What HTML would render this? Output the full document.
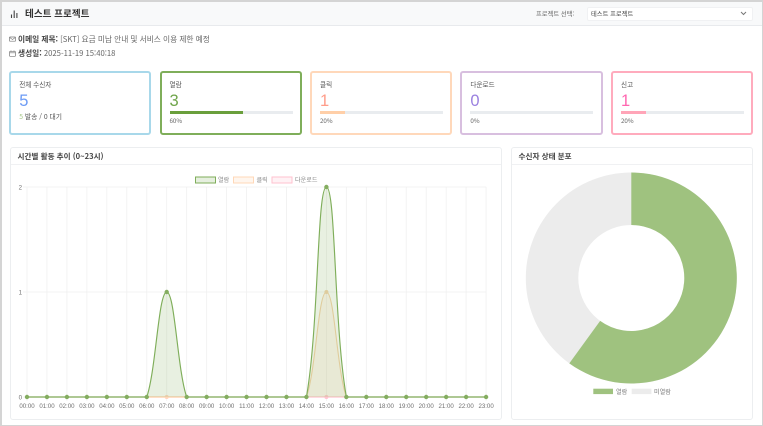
<!DOCTYPE html>
<html lang="ko"><head><meta charset="utf-8"><title>테스트 프로젝트</title>
<style>
html,body{margin:0;padding:0;width:763px;height:426px;overflow:hidden;background:#fff}
body{position:relative;font-family:"Noto Sans CJK KR","Liberation Sans",sans-serif;color:#333}
.a{position:absolute;white-space:nowrap;line-height:1}
.t{filter:blur(.3px)}
.card{position:absolute;top:70.5px;width:142.3px;height:64px;box-sizing:border-box;border:2px solid;border-radius:3px;background:#fff}
.box{position:absolute;box-sizing:border-box;background:#fff;border:1px solid #eceef0;border-radius:3px}
.bar{position:absolute;left:8px;top:38.5px;width:123px;height:3px;background:#e9ecef}
.bar i{display:block;height:3px}
.l{position:absolute;left:8px;top:7.5px;font-size:6.6px;line-height:8px;color:#555;white-space:nowrap}
.n{position:absolute;left:8px;top:19.5px;font-family:"Liberation Sans",sans-serif;font-size:16.5px;line-height:18px;white-space:nowrap}
.p{position:absolute;left:8px;top:44px;font-size:6.2px;line-height:8px;color:#666}
svg text{font-family:"Liberation Sans","Noto Sans CJK KR",sans-serif}
</style></head><body>
<div class="a" style="left:0;top:0;width:763px;height:1.5px;background:#d4d4d4"></div>
<div class="a" style="left:0;top:0;width:1.5px;height:426px;background:#d4d4d4"></div>
<div class="a" style="left:761.5px;top:0;width:1.5px;height:426px;background:#d4d4d4"></div>
<div class="a" style="left:0;top:424.5px;width:763px;height:1.5px;background:#d4d4d4"></div>
<div class="a" style="left:1.5px;top:1.5px;width:760px;height:23px;background:#f8f9fa;border-bottom:1.2px solid #e8eaed"></div>

<svg class="a t" style="left:10px;top:9px" width="9" height="10" viewBox="0 0 9 10"><path d="M1.5 5.5V9M4.2 1.5V9M6.9 4V9" stroke="#444" stroke-width="1.1" fill="none"/></svg>
<div class="a t" style="left:25px;top:7.5px;font-size:9.6px;line-height:10px;font-weight:bold;color:#333">테스트 프로젝트</div>
<div class="a t" style="left:536px;top:9.5px;font-size:6.3px;line-height:7px;color:#666">프로젝트 선택:</div>
<div class="a" style="left:587px;top:6.5px;width:165.5px;height:14.5px;box-sizing:border-box;background:#fff;border:1px solid #f0f1f3;border-radius:2px"></div>
<div class="a t" style="left:591px;top:10px;font-size:6.3px;line-height:7px;color:#444">테스트 프로젝트</div>
<svg class="a t" style="left:740px;top:11px" width="7" height="5" viewBox="0 0 7 5"><path d="M1 1l2.5 2.5L6 1" stroke="#777" stroke-width="1" fill="none"/></svg>

<svg class="a t" style="left:9px;top:36px" width="7" height="6" viewBox="0 0 7 6"><rect x=".5" y="1" width="6" height="4.2" rx=".5" stroke="#777" stroke-width=".7" fill="none"/><path d="M.7 1.5l2.8 2 2.8-2" stroke="#777" stroke-width=".6" fill="none"/></svg>
<div class="a t" style="left:18px;top:35.5px;font-size:7.7px;line-height:8px;color:#666"><b style="color:#444">이메일 제목:</b> [SKT] 요금 미납 안내 및 서비스 이용 제한 예정</div>
<svg class="a t" style="left:9px;top:49.5px" width="7" height="7" viewBox="0 0 7 7"><rect x=".6" y="1.3" width="5.8" height="5" rx=".6" stroke="#777" stroke-width=".7" fill="none"/><path d="M.6 2.8h5.8M2 .4v1.4M5 .4v1.4" stroke="#777" stroke-width=".6" fill="none"/></svg>
<div class="a t" style="left:18px;top:49.7px;font-size:7.7px;line-height:8px;color:#666"><b style="color:#444">생성일:</b> 2025-11-19 15:40:18</div>

<div class="card" style="left:9.2px;border-color:#a8d8ea"><div class="l t">전체 수신자</div><div class="n t" style="color:#6c9bf5">5</div><div class="l t" style="top:39.5px;font-size:6.8px"><span style="color:#a9c98c">5</span> 발송 / 0 대기</div></div>
<div class="card" style="left:159.5px;border-color:#7fae5a"><div class="l t">열람</div><div class="n t" style="color:#6fa54a">3</div><div class="bar"><i style="width:60%;background:#6a9f3c"></i></div><div class="p t">60%</div></div>
<div class="card" style="left:310px;border-color:#ffd8ba"><div class="l t">클릭</div><div class="n t" style="color:#ff9d8a">1</div><div class="bar"><i style="width:20%;background:#ffcfa8"></i></div><div class="p t">20%</div></div>
<div class="card" style="left:460.4px;border-color:#d8bfdf"><div class="l t">다운로드</div><div class="n t" style="color:#9a80e0">0</div><div class="bar"></div><div class="p t">0%</div></div>
<div class="card" style="left:611px;border-color:#ffabbd"><div class="l t">신고</div><div class="n t" style="color:#ff66b0">1</div><div class="bar"><i style="width:20%;background:#ffa5b8"></i></div><div class="p t">20%</div></div>

<div class="box" style="left:9.5px;top:147px;width:492.5px;height:273px"></div>
<div class="a" style="left:10.5px;top:164px;width:490.5px;height:1px;background:#f0f1f3"></div>
<div class="a t" style="left:17.5px;top:151.5px;font-size:7.6px;line-height:9px;font-weight:bold;color:#444">시간별 활동 추이 (0~23시)</div>

<div class="box" style="left:510.5px;top:147px;width:242px;height:273px"></div>
<div class="a" style="left:511.5px;top:164px;width:240px;height:1px;background:#f0f1f3"></div>
<div class="a t" style="left:518.5px;top:151.5px;font-size:7.6px;line-height:9px;font-weight:bold;color:#444">수신자 상태 분포</div>

<svg class="a" style="left:0;top:0" width="763" height="426" viewBox="0 0 763 426">
<g stroke="#f0f0f0" stroke-width=".8" fill="none">
<path d="M23 187H486.1M23 292H486.1M23 397H486.1"/>
<path d="M27 187V401M46.96 187V401M66.92 187V401M86.88 187V401M106.84 187V401M126.8 187V401M146.76 187V401M166.72 187V401M186.68 187V401M206.64 187V401M226.6 187V401M246.56 187V401M266.52 187V401M286.48 187V401M306.44 187V401M326.4 187V401M346.36 187V401M366.32 187V401M386.28 187V401M406.24 187V401M426.2 187V401M446.16 187V401M466.12 187V401M486.08 187V401"/>
</g>
<!-- 다운로드 -->
<path d="M27 397H486.08" stroke="#ffc2cf" stroke-width="1.2" fill="none"/>
<circle cx="326.4" cy="397" r="2" fill="#ffc2cf"/><circle cx="166.72" cy="397" r="2" fill="#ffd3bd"/>
<!-- 클릭 -->
<path d="M306.44 397C316 370 318.2 292 326.4 292C334.6 292 336.8 370 346.36 397Z" fill="#ffd8b8" fill-opacity=".2"/>
<path d="M146.76 397H186.68" stroke="#ffd8b8" stroke-width="1.4" fill="none"/>
<path d="M306.44 397C316 370 318.2 292 326.4 292C334.6 292 336.8 370 346.36 397" stroke="#f6d4ab" stroke-width="1.1" fill="none"/>
<circle cx="326.4" cy="292" r="2" fill="#f3d3ad"/>
<!-- 열람 -->
<path d="M146.76 397C156 370 158.5 292 166.72 292C174.9 292 177.4 370 186.68 397ZM306.44 397C319 325 317 187 326.4 187C335.8 187 333.8 325 346.36 397Z" fill="#7fae5a" fill-opacity=".18"/>
<path d="M27 397H146.76M186.68 397H306.44M346.36 397H486.08" stroke="#a3c286" stroke-width="1.7" fill="none"/>
<path d="M146.76 397C156 370 158.5 292 166.72 292C174.9 292 177.4 370 186.68 397M306.44 397C319 325 317 187 326.4 187C335.8 187 333.8 325 346.36 397" stroke="#7fae5a" stroke-width="1.15" fill="none"/>
<g fill="#84ad60">
<circle cx="27" cy="397" r="2.2"/><circle cx="46.96" cy="397" r="2.2"/><circle cx="66.92" cy="397" r="2.2"/><circle cx="86.88" cy="397" r="2.2"/><circle cx="106.84" cy="397" r="2.2"/><circle cx="126.8" cy="397" r="2.2"/><circle cx="146.76" cy="397" r="2.2"/><circle cx="166.72" cy="292" r="2.2"/><circle cx="186.68" cy="397" r="2.2"/><circle cx="206.64" cy="397" r="2.2"/><circle cx="226.6" cy="397" r="2.2"/><circle cx="246.56" cy="397" r="2.2"/><circle cx="266.52" cy="397" r="2.2"/><circle cx="286.48" cy="397" r="2.2"/><circle cx="306.44" cy="397" r="2.2"/><circle cx="326.4" cy="187" r="2.2"/><circle cx="346.36" cy="397" r="2.2"/><circle cx="366.32" cy="397" r="2.2"/><circle cx="386.28" cy="397" r="2.2"/><circle cx="406.24" cy="397" r="2.2"/><circle cx="426.2" cy="397" r="2.2"/><circle cx="446.16" cy="397" r="2.2"/><circle cx="466.12" cy="397" r="2.2"/><circle cx="486.08" cy="397" r="2.2"/>
</g>
<g class="t" font-size="6.1" fill="#6f6f6f" text-anchor="middle">
<text x="27" y="408">00:00</text><text x="46.96" y="408">01:00</text><text x="66.92" y="408">02:00</text><text x="86.88" y="408">03:00</text><text x="106.84" y="408">04:00</text><text x="126.8" y="408">05:00</text><text x="146.76" y="408">06:00</text><text x="166.72" y="408">07:00</text><text x="186.68" y="408">08:00</text><text x="206.64" y="408">09:00</text><text x="226.6" y="408">10:00</text><text x="246.56" y="408">11:00</text><text x="266.52" y="408">12:00</text><text x="286.48" y="408">13:00</text><text x="306.44" y="408">14:00</text><text x="326.4" y="408">15:00</text><text x="346.36" y="408">16:00</text><text x="366.32" y="408">17:00</text><text x="386.28" y="408">18:00</text><text x="406.24" y="408">19:00</text><text x="426.2" y="408">20:00</text><text x="446.16" y="408">21:00</text><text x="466.12" y="408">22:00</text><text x="486.08" y="408">23:00</text>
</g>
<g class="t" font-size="6.1" fill="#6f6f6f" text-anchor="end"><text x="22" y="189.5">2</text><text x="22" y="294.5">1</text><text x="22" y="399.5">0</text></g>
<!-- legend -->
<rect x="195.5" y="177" width="20" height="6" fill="#e6efdf" stroke="#7fae5a" stroke-width="1"/>
<text class="t" x="218" y="182.2" font-size="6.1" fill="#888">열람</text>
<rect x="233.5" y="177" width="20" height="6" fill="#fff6ee" stroke="#ffd8b8" stroke-width="1"/>
<text class="t" x="256.5" y="182.2" font-size="6.1" fill="#888">클릭</text>
<rect x="272" y="177" width="20" height="6" fill="#fff2f5" stroke="#ffc2cf" stroke-width="1"/>
<text class="t" x="295" y="182.2" font-size="6.1" fill="#888">다운로드</text>
<!-- doughnut -->
<circle cx="631.3" cy="278" r="79.25" fill="none" stroke="#ececec" stroke-width="52.5"/>
<path d="M631.3 172.5A105.5 105.5 0 1 1 569.3 363.35L600.15 320.88A53 53 0 1 0 631.3 225Z" fill="#9fc27f"/>
<rect x="593.3" y="388.7" width="19.7" height="5.4" fill="#9fc27f"/>
<text class="t" x="616" y="393.8" font-size="6.1" fill="#777">열람</text>
<rect x="631.7" y="388.7" width="19.7" height="5.4" fill="#ececec"/>
<text class="t" x="654" y="393.8" font-size="6.1" fill="#777">미열람</text>
</svg>
</body></html>
